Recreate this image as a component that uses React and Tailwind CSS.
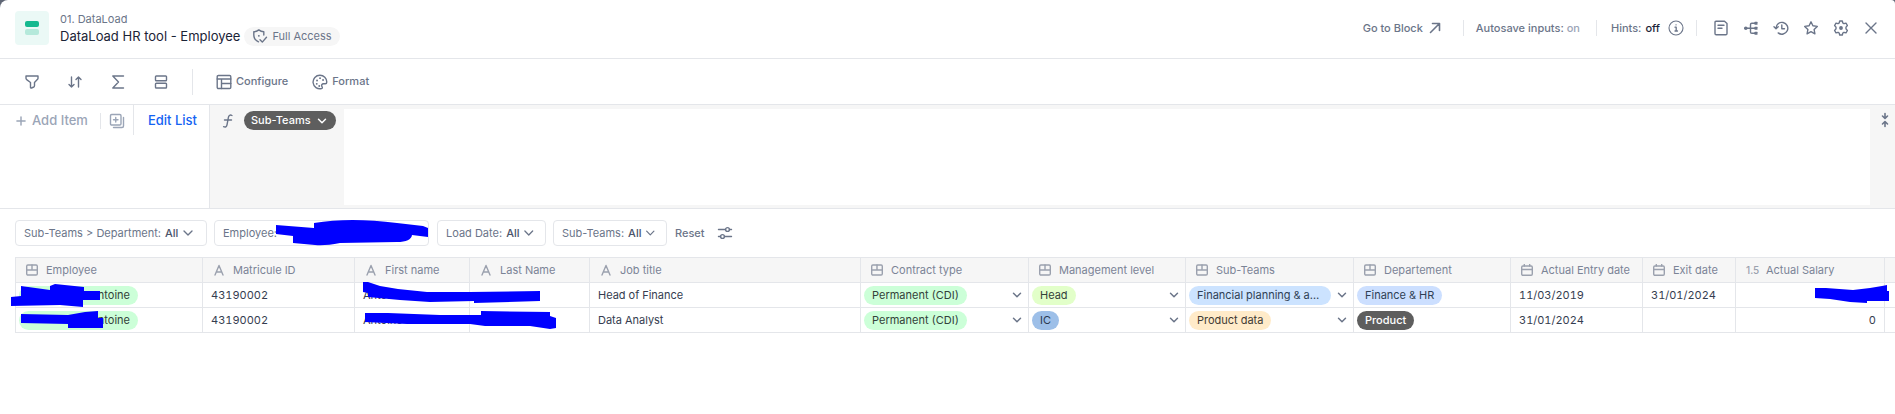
import React, { useState } from 'react';
import { ChevronDown, Plus, X } from 'lucide-react';

const Icon = ({ children, className = 'w-4 h-4', viewBox = '0 0 16 16' }) => (
  <svg
    viewBox={viewBox}
    className={`shrink-0 ${className}`}
    fill="none"
    stroke="currentColor"
    strokeWidth="1.4"
    strokeLinecap="round"
    strokeLinejoin="round"
    aria-hidden="true"
  >
    {children}
  </svg>
);

const FilterIcon = () => (
  <Icon>
    <path d="M2 2h12v2.2c0 .6-.3 1-.7 1.4L10.5 8.500v3.300c0 .5-.3 1-.7 1.200l-2.300 1c-.5.2-1-.1-1-.6V8.500L2.700 5.600C2.300 5.200 2 4.800 2 4.200z" />
  </Icon>
);

const SortIcon = () => (
  <Icon>
    <path d="M4.500 3v10M2 10.500 4.500 13 7 10.500M11.500 13V3M9 5.500 11.500 3 14 5.500" />
  </Icon>
);

const SigmaIcon = () => (
  <Icon>
    <path d="M13.500 2H2.800l5.700 6-5.700 6h10.700" />
  </Icon>
);

const RowsIcon = () => (
  <Icon>
    <rect x="2.500" y="2" width="11" height="4.800" rx="0.800" />
    <rect x="2.500" y="9.200" width="11" height="4.800" rx="0.800" />
  </Icon>
);

const ConfigureIcon = () => (
  <Icon>
    <rect x="1.200" y="1.500" width="13.600" height="13" rx="1.200" />
    <path d="M1.200 5h13.600M5.500 5v9.500M5.500 9.500h9.300" />
  </Icon>
);

const PaletteIcon = () => (
  <Icon>
    <path d="M8 1.200a6.800 6.800 0 1 0 1.500 13.400c1.200-.3.900-1.500.4-2.200-.7-1.200.1-2.600 1.500-2.600h1.900c1 0 1.500-.8 1.500-1.800A6.800 6.800 0 0 0 8 1.200z" />
    <path d="M5 6.500h.1M8 4.200h.1M11 6h.1M4.700 9.800h.1M7.200 12h.1" strokeWidth="1.800" />
  </Icon>
);

const ShieldIcon = () => (
  <Icon>
    <path d="M6.500 13.800C3.500 12.500 1.800 10 1.800 7V3.800c1.900 0 3.600-.7 5-1.900 1.400 1.200 3.100 1.900 5 1.900V7" />
    <path d="m8 11.800 2.300 2.300 4.200-4.800" />
    <path d="M6.800 7.800h.1" strokeWidth="1.800" />
  </Icon>
);

const DuplicateIcon = () => (
  <Icon>
    <rect x="1.500" y="1.500" width="10.500" height="10.500" rx="1.200" />
    <path d="M6.750 4.500v4.500M4.500 6.750h4.500M14.500 4.500v8.500c0 .8-.7 1.500-1.500 1.500H4.500" />
  </Icon>
);

const FunctionIcon = () => (
  <Icon>
    <path d="M12 2.500c-1.800-1-3.300-.2-3.600 1.800L7 11.800c-.4 2-1.600 2.800-3.400 1.900M4.500 7h7" />
  </Icon>
);

const ArrowIcon = () => (
  <Icon>
    <path d="m3.500 12.500 8.700-8.700M5.500 3.500h7v7" strokeWidth="1.600" />
  </Icon>
);

const InfoIcon = () => (
  <Icon>
    <circle cx="8" cy="8" r="7" strokeWidth="1.100" />
    <path d="M7 7.200h1.200v3.600M7 11h2.500M8 4.800h.1" strokeWidth="1.300" />
  </Icon>
);

const NoteIcon = () => (
  <Icon>
    <path d="M3 1.200h8.500l2.500 2.300v10.100c0 .7-.5 1.200-1.200 1.200H3.200c-.7 0-1.200-.5-1.200-1.200V2.400c0-.7.400-1.200 1-1.200z" />
    <path d="M5 5.200h6M5 8.200h4" />
  </Icon>
);

const TreeIcon = () => (
  <Icon>
    <path d="M2 8.200h11M13 3.200H8.800c-.8 0-1.300.4-1.300 1.200v7.600c0 .8.500 1.200 1.300 1.200H13" />
    <g fill="currentColor" stroke="none">
      <circle cx="2.800" cy="8.200" r="1.800" />
      <rect x="11.500" y="1.700" width="3" height="3" rx="0.500" />
      <rect x="11.500" y="6.700" width="3" height="3" rx="0.500" />
      <rect x="11.500" y="11.700" width="3" height="3" rx="0.500" />
    </g>
  </Icon>
);

const HistoryIcon = () => (
  <Icon>
    <path d="M3 8.500A5.900 5.900 0 1 1 5.200 12.900M1 6.700l2 2 2.200-2M8.800 5v3.800h2.700" />
  </Icon>
);

const StarIcon = () => (
  <Icon>
    <path d="m8 1.800 1.900 4 4.400.6-3.200 3 .8 4.400L8 11.700l-3.900 2.100.8-4.400-3.200-3 4.400-.6z" />
  </Icon>
);

const GearIcon = () => (
  <Icon>
    <path d="M6.700 1h2.600l.5 2 1.200.7 2-.6 1.400 2.400L13 7.100v1.800l1.400 1.600-1.400 2.400-2-.6-1.200.7-.5 2H6.700l-.5-2-1.200-.7-2 .6-1.400-2.400L3 8.900V7.100L1.600 5.500 3 3.100l2 .6L6.200 3z" />
    <circle cx="8" cy="8" r="1.200" fill="currentColor" />
  </Icon>
);

const SlidersIcon = () => (
  <Icon>
    <path d="M1.500 4.500h7M12.500 4.500h2M1.500 11.500h2M7.500 11.500h7" />
    <circle cx="10.500" cy="4.500" r="1.900" />
    <circle cx="5.500" cy="11.500" r="1.900" />
  </Icon>
);

const CollapseIcon = () => (
  <Icon>
    <path d="M8 1.500V6M5.500 4 8 6.500 10.500 4M8 14.500V10M5.500 12 8 9.500l2.500 2.500" strokeWidth="1.600" />
  </Icon>
);

const typeIcons = {
  list: (
    <Icon className="w-3 h-3" viewBox="0 0 12 12">
      <rect x="0.700" y="1" width="10.600" height="10" rx="1.200" />
      <path d="M.700 6h10.600M6 1v5" />
    </Icon>
  ),
  text: (
    <Icon className="w-3 h-3" viewBox="0 0 12 12">
      <path d="M2 11 6 1.500 10 11M3.400 8h5.200" />
    </Icon>
  ),
  date: (
    <Icon className="w-3 h-3" viewBox="0 0 12 12">
      <rect x="0.700" y="2" width="10.600" height="9.300" rx="1.200" />
      <path d="M.700 5.500h10.600M3.300.500V2M8.700.500V2" />
    </Icon>
  ),
  number: <span className="block w-3 text-[10px] font-medium">1.5</span>,
};

const columns = [
  { label: 'Employee', type: 'list', width: 'w-[187px]' },
  { label: 'Matricule ID', type: 'text', width: 'w-[152px]' },
  { label: 'First name', type: 'text', width: 'w-[115px]' },
  { label: 'Last Name', type: 'text', width: 'w-[120px]' },
  { label: 'Job title', type: 'text', width: 'w-[271px]' },
  { label: 'Contract type', type: 'list', width: 'w-[168px]' },
  { label: 'Management level', type: 'list', width: 'w-[157px]' },
  { label: 'Sub-Teams', type: 'list', width: 'w-[168px]' },
  { label: 'Departement', type: 'list', width: 'w-[157px]' },
  { label: 'Actual Entry date', type: 'date', width: 'w-[132px]' },
  { label: 'Exit date', type: 'date', width: 'w-[93px]' },
  { label: 'Actual Salary', type: 'number', width: 'w-[149px]' },
  { label: '', type: 'number', width: 'w-[149px]' },
];

const rows = [
  {
    id: 1,
    matricule: '43190002',
    job: 'Head of Finance',
    contract: 'Permanent (CDI)',
    level: 'Head',
    levelColor: 'bg-[#e2ffc9] text-[#33423a]',
    team: 'Financial planning & analysis',
    teamColor: 'bg-[#cce3ff] text-[#2f3f55]',
    department: 'Finance & HR',
    departmentColor: 'bg-[#ccdfff] text-[#2f3f55]',
    entry: '11/03/2019',
    exit: '31/01/2024',
    salary: '',
  },
  {
    id: 2,
    matricule: '43190002',
    job: 'Data Analyst',
    contract: 'Permanent (CDI)',
    level: 'IC',
    levelColor: 'bg-[#9dbfe8] text-[#2b3a50]',
    team: 'Product data',
    teamColor: 'bg-[#ffebc9] text-[#3f3a33]',
    department: 'Product',
    departmentColor: 'bg-[#5e5e5e] text-white font-medium',
    entry: '31/01/2024',
    exit: '',
    salary: '0',
  },
];

const Divider = ({ className = 'h-4' }) => <span className={`w-px bg-[#e4e6ea] ${className}`} />;

const Chip = ({ color, children }) => (
  <span className={`inline-block h-[19px] leading-[19px] px-2 rounded-full truncate ${color}`}>{children}</span>
);

const ChipCell = ({ color, label, dropdown }) => (
  <td className="border border-[#e4e6ea] pl-[3px] pr-1">
    <div className="flex items-center justify-between gap-1">
      <Chip color={color}>{label}</Chip>
      {dropdown && (
        <button type="button" aria-label={`Change ${label}`} className="text-[#6b7589]">
          <ChevronDown className="w-3.5 h-3.5" strokeWidth={2.5} />
        </button>
      )}
    </div>
  </td>
);

const TextCell = ({ children, className = '' }) => (
  <td className={`border border-[#e4e6ea] px-2 ${className}`}>{children}</td>
);

const FilterButton = ({ label, value, className = '' }) => (
  <button
    type="button"
    className={`flex items-center h-[26px] px-2 border border-[#e4e6ea] rounded text-[11px] text-[#6b7589] whitespace-nowrap ${className}`}
  >
    {label}:{value && <span className="ml-1 font-medium text-[#4b556b]">{value}</span>}
    {value && <ChevronDown className="w-4 h-4 ml-0.5" />}
  </button>
);

const Header = () => {
  const [hints, setHints] = useState(false);
  const [autosave, setAutosave] = useState(true);

  return (
    <header className="flex items-center justify-between h-[59px] pb-0.5 pl-[15px] pr-4 border-b border-[#e4e6ea]">
      <div className="flex items-center gap-[11px]">
        <div className="flex flex-col items-center justify-center gap-0.5 w-[34px] h-[34px] rounded bg-[#ebf9f6]">
          <span className="w-3.5 h-1.5 rounded-xs bg-[#15b98f]" />
          <span className="w-3.5 h-1.5 rounded-xs bg-[#b5e9db]" />
        </div>
        <div>
          <div className="text-[11px] leading-4 text-[#6b7589]">01. DataLoad</div>
          <div className="flex items-center gap-1">
            <h1 className="text-[13px] leading-[19px] text-[#1b2336]">DataLoad HR tool - Employee</h1>
            <span className="flex items-center gap-1 h-[19px] px-2 rounded-full bg-[#f6f6f6] text-[11px] text-[#6b7589]">
              <ShieldIcon />
              Full Access
            </span>
          </div>
        </div>
      </div>

      <div className="flex items-center text-[11px] font-medium text-[#6b7589]">
        <a href="#block" className="flex items-center gap-1">
          Go to Block
          <ArrowIcon />
        </a>
        <Divider className="h-4 ml-5 mr-3" />
        <button type="button" onClick={() => setAutosave(!autosave)}>
          Autosave inputs: <span className="text-[#9ba5b7]">{autosave ? 'on' : 'off'}</span>
        </button>
        <Divider className="h-4 ml-4 mr-3.5" />
        <button type="button" className="flex items-center" onClick={() => setHints(!hints)}>
          Hints:<span className="ml-1 mr-2 text-[#1b2336]">{hints ? 'on' : 'off'}</span>
          <InfoIcon />
        </button>
        <Divider className="h-4 ml-3 mr-4" />
        <div className="flex items-center gap-3.5">
          <button type="button" aria-label="Notes"><NoteIcon /></button>
          <button type="button" aria-label="Dependencies"><TreeIcon /></button>
          <button type="button" aria-label="History"><HistoryIcon /></button>
          <button type="button" aria-label="Favorite"><StarIcon /></button>
          <button type="button" aria-label="Settings"><GearIcon /></button>
          <button type="button" aria-label="Close">
            <Icon>
              <path d="m3 3 10 10M13 3 3 13" />
            </Icon>
          </button>
        </div>
      </div>
    </header>
  );
};

const Toolbar = () => (
  <div className="flex items-center h-[46px] pl-6 border-b border-[#e4e6ea] text-[11px] font-medium text-[#6b7589]">
    <div className="flex items-center gap-[27px]">
      <button type="button" aria-label="Filter"><FilterIcon /></button>
      <button type="button" aria-label="Sort"><SortIcon /></button>
      <button type="button" aria-label="Totals"><SigmaIcon /></button>
      <button type="button" aria-label="Layout"><RowsIcon /></button>
    </div>
    <Divider className="h-[26px] mx-[23px]" />
    <button type="button" className="flex items-center gap-1">
      <ConfigureIcon />
      Configure
    </button>
    <button type="button" className="flex items-center gap-1 ml-6">
      <PaletteIcon />
      Format
    </button>
  </div>
);

const FormulaBar = () => (
  <div className="flex h-[104px] border-b border-[#e4e6ea]">
    <div className="flex items-start w-[210px] border-r border-[#e4e6ea] text-[13px] font-medium">
      <div className="flex items-center h-[30px] pt-0.5 pl-3.5 pr-2 border-r border-[#e4e6ea] text-[#9ba5b7]">
        <button type="button" className="flex items-center gap-1">
          <Plus className="w-3.5 h-3.5" strokeWidth={2.5} />
          Add Item
        </button>
        <Divider className="h-4 ml-3 mr-2" />
        <button type="button" aria-label="Duplicate item"><DuplicateIcon /></button>
      </div>
      <button type="button" className="h-[30px] pt-0.5 pl-3.5 pr-2 text-[#1463f3] whitespace-nowrap">Edit List</button>
    </div>
    <div className="flex flex-1 items-start bg-[#f6f6f6]">
      <div className="flex items-center gap-2 h-[31px] pl-2.5 pr-2 text-[#6b7589]">
        <FunctionIcon />
        <button
          type="button"
          className="flex items-center gap-1 h-[19px] pl-[7px] pr-[7px] rounded-full bg-[#5e5e5e] text-[11px] font-medium text-white"
        >
          Sub-Teams
          <ChevronDown className="w-3.5 h-3.5" strokeWidth={2.5} />
        </button>
      </div>
      <textarea aria-label="Formula" className="flex-1 h-24 mt-1 bg-white resize-none outline-none" />
      <button type="button" aria-label="Collapse formula bar" className="mt-[7px] ml-[7px] mr-0.5 text-[#6b7589]">
        <CollapseIcon />
      </button>
    </div>
  </div>
);

const Filters = () => (
  <div className="flex items-center pl-[15px] py-[11px]">
    <FilterButton label="Sub-Teams > Department" value="All" className="w-48" />
    <div className="relative ml-[7px]">
      <FilterButton label="Employee" className="w-[215px]" />
      <svg viewBox="276 219 153 27" className="absolute left-[62px] -top-px w-[153px] h-[27px]" aria-hidden="true">
        <path
          fill="#0000ff"
          d="M276 225 314 228V223Q350 217 397 223L423 226 428 228V237L412 235Q411 242 397 242L340 243Q325 246 315 245L293 243V236L276 234z"
        />
      </svg>
    </div>
    <FilterButton label="Load Date" value="All" className="w-[109px] ml-2" />
    <FilterButton label="Sub-Teams" value="All" className="w-[114px] ml-[7px]" />
    <button type="button" className="ml-2 text-[11px] font-medium text-[#6b7589]">Reset</button>
    <button type="button" aria-label="Filter settings" className="ml-3 text-[#6b7589]">
      <SlidersIcon />
    </button>
  </div>
);

const Grid = () => (
  <div className="relative overflow-hidden pl-[15px] pb-6">
    <table className="table-fixed w-[2018px] border-collapse text-[11px] text-[#353d50]">
      <thead>
        <tr className="h-[25px] bg-[#f6f6f6] text-[#7b8496]">
          {columns.map((col, i) => (
            <th key={i} className={`border border-[#e4e6ea] pl-2.5 font-normal ${col.width}`}>
              <div className="flex items-center gap-2 whitespace-nowrap">
                <span className="text-[#9ba1ae]">{typeIcons[col.type]}</span>
                {col.label}
              </div>
            </th>
          ))}
        </tr>
      </thead>
      <tbody>
        {rows.map((row) => (
          <tr key={row.id} className="h-[25px] tabular-nums">
            <td className="border border-[#e4e6ea] pl-[3px]">
              <span className="block w-[119px] h-[19px] leading-[19px] px-2 rounded-full bg-[#ccffd8] text-right text-[#33423a]">
                Antoine
              </span>
            </td>
            <TextCell>{row.matricule}</TextCell>
            <TextCell>Antoine</TextCell>
            <TextCell />
            <TextCell>{row.job}</TextCell>
            <ChipCell label={row.contract} color="bg-[#ccffd8] text-[#33423a]" dropdown />
            <ChipCell label={row.level} color={row.levelColor} dropdown />
            <ChipCell label={row.team} color={row.teamColor} dropdown />
            <ChipCell label={row.department} color={row.departmentColor} />
            <TextCell>{row.entry}</TextCell>
            <TextCell>{row.exit}</TextCell>
            <TextCell className="text-right">{row.salary}</TextCell>
            <TextCell />
          </tr>
        ))}
      </tbody>
    </table>

    {/* Hand-drawn masks over personal data */}
    <svg viewBox="0 257 1895 78" className="absolute left-0 top-0 w-[1895px] h-[78px] max-w-none pointer-events-none" aria-hidden="true">
      <g fill="#0000ff">
        <path d="M21 286 50 290V286L55 284 84 287V291H100V300H83V307L60 305 11 306V297L21 296z" />
        <path d="M21 314 68 315 85 312 98 311V318H103V328H68V324L21 323z" />
        <path d="M363 282H368L380 286 398 289 427 292H470L540 291V301L474 303V301L430 302 400 300 368 297V293L363 292z" />
        <path d="M365 313H388L440 315H481V311L550 312V316L556 318V328L550 329 530 326H485L470 324H407L365 322z" />
        <path d="M1815 288 1826 288 1853 290 1870 288 1882 286 1887 285V291H1889V301H1867V303L1850 302 1830 299 1815 298z" />
      </g>
    </svg>
  </div>
);

const App = () => (
  <div className="bg-[#5f6675] overflow-hidden">
    <div className="font-[Inter,'Liberation_Sans',sans-serif] bg-white rounded-tl-lg rounded-tr-sm overflow-hidden">
      <Header />
      <Toolbar />
      <FormulaBar />
      <main>
        <Filters />
        <Grid />
      </main>
    </div>
  </div>
);

export default App;
